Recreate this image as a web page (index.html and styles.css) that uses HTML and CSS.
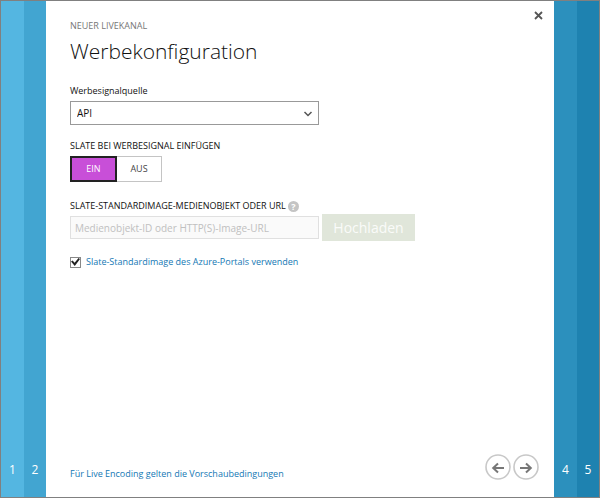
FILE: index.html
```html
<!DOCTYPE html>
<html lang="de">
<head>
<meta charset="utf-8">
<meta name="viewport" content="width=device-width, initial-scale=1">
<title>Werbekonfiguration</title>
<link rel="stylesheet" href="styles.css">
</head>
<body>
<div class="wizard">
  <button type="button" class="step step-1">1</button>
  <button type="button" class="step step-2">2</button>
  <main class="page">
    <button type="button" class="close" aria-label="Schließen">
      <svg width="9" height="9" viewBox="0 0 9 9" aria-hidden="true"><path d="M1 1L8 8M8 1L1 8" stroke="#555" stroke-width="1.8" fill="none"/></svg>
    </button>
    <header class="heading">
      <p class="eyebrow">NEUER LIVEKANAL</p>
      <h1 class="title">Werbekonfiguration</h1>
    </header>
    <form class="form">
      <div class="field">
        <label class="label" for="source">Werbesignalquelle</label>
        <div class="select-wrap">
          <select class="select" id="source"><option>API</option></select>
          <svg class="chevron" width="10" height="6" viewBox="0 0 10 6" aria-hidden="true"><path d="M1.500 1L5 4.500L8.500 1" stroke="#555" stroke-width="1.5" fill="none"/></svg>
        </div>
      </div>
      <fieldset class="field">
        <legend class="label">SLATE BEI WERBESIGNAL EINFÜGEN</legend>
        <div class="toggle">
          <button type="button" class="option option-on" aria-pressed="true">EIN</button>
          <button type="button" class="option" aria-pressed="false">AUS</button>
        </div>
      </fieldset>
      <div class="field">
        <div class="label-row">
          <label class="label" for="slate">SLATE-STANDARDIMAGE-MEDIENOBJEKT ODER URL</label>
          <button type="button" class="help" aria-label="Hilfe">?</button>
        </div>
        <div class="upload-row">
          <input class="input" id="slate" type="text" placeholder="Medienobjekt-ID oder HTTP(S)-Image-URL" disabled>
          <button type="button" class="upload" disabled>Hochladen</button>
        </div>
      </div>
      <div class="check-row">
        <input class="check" id="default-slate" type="checkbox" checked>
        <label class="link" for="default-slate">Slate-Standardimage des Azure-Portals verwenden</label>
      </div>
    </form>
    <footer class="footer">
      <a class="link" href="#">Für Live Encoding gelten die Vorschaubedingungen</a>
      <nav class="pager">
        <button type="button" class="arrow" aria-label="Zurück">
          <svg width="26" height="26" viewBox="0 0 26 26" fill="none" aria-hidden="true"><circle cx="13" cy="13" r="12" stroke="#c8c8c8" stroke-width="1.6"/><path d="M19 14H8M13 9.500L8.200 14L13 18.500" stroke="#777" stroke-width="2"/></svg>
        </button>
        <button type="button" class="arrow" aria-label="Weiter">
          <svg width="26" height="26" viewBox="0 0 26 26" fill="none" aria-hidden="true"><circle cx="13" cy="13" r="12" stroke="#c8c8c8" stroke-width="1.6"/><path d="M7 14H18M13 9.500L17.800 14L13 18.500" stroke="#777" stroke-width="2"/></svg>
        </button>
      </nav>
    </footer>
  </main>
  <button type="button" class="step step-4">4</button>
  <button type="button" class="step step-5">5</button>
</div>
</body>
</html>
```
FILE: styles.css
```css
* { box-sizing: border-box; }

body {
  margin: 0;
  font: 10px/14px "Open Sans", "Noto Sans", sans-serif;
  color: #111;
  background: #fff;
}

button, input, select { font: inherit; color: inherit; margin: 0; }
button { border: 0; padding: 0; background: none; }
svg { display: block; }

.wizard {
  display: grid;
  grid-template-columns: 23px 22px minmax(0, 1fr) 23px 22px;
  min-height: 100vh;
  border: 1px solid #808080;
}

.step {
  display: flex;
  align-items: flex-end;
  justify-content: center;
  padding-bottom: 19px;
  font-size: 12px;
  line-height: 16px;
  color: #fff;
}
.step-1 { background: #54b6e1; }
.step-2 { background: #42a5d1; }
.step-4 { background: #2c90bd; }
.step-5 { background: #1e82b0; }

.page {
  position: relative;
  display: flex;
  flex-direction: column;
  padding: 17px 15px 16px 24px;
}

.close { position: absolute; top: 10px; right: 11px; }

.eyebrow { margin: 0; font-size: 9px; line-height: 16px; color: #777; }
.title {
  margin: 0 0 16px;
  font-size: 21px;
  font-weight: 300;
  line-height: 34px;
}

.form { flex: 1; }
.field { margin: 0 0 14px; padding: 0; border: 0; min-width: 0; }
.label { display: block; padding: 0; margin-bottom: 3px; font-size: 9px; line-height: 14px; }

.select-wrap { position: relative; width: 249px; }
.select {
  display: block;
  width: 100%;
  height: 24px;
  padding: 0 6px;
  appearance: none;
  border: 1px solid #999;
  border-radius: 0;
  background: #fff;
}
.chevron { position: absolute; right: 6px; top: 10px; pointer-events: none; }

.toggle { display: flex; }
.option {
  width: 45px;
  height: 26px;
  border: 1px solid #c4c4c4;
  border-left: 0;
  font-size: 9px;
  color: #444;
}
.option-on {
  width: 47px;
  border: 2px solid #222;
  background: #c84fd8;
  color: #fff;
}

.label-row { display: flex; align-items: center; gap: 2px; margin-top: 17px; }
.label-row .label { margin: 0; }
.help {
  width: 11px;
  height: 11px;
  border-radius: 50%;
  background: #c4c4c4;
  color: #fff;
  font-size: 9px;
  font-weight: 700;
  line-height: 11px;
}

.upload-row { display: flex; align-items: center; gap: 3px; margin-top: 1px; }
.input {
  width: 249px;
  height: 23px;
  padding: 0 4px;
  border: 1px solid #e0e0e0;
  background: #fafafa;
}
.input::placeholder { color: #c0c0c0; opacity: 1; }
.upload {
  height: 27px;
  width: 93px;
  background: #e0e6da;
  color: #fafbf9;
  font-size: 14px;
}

.check-row { display: flex; align-items: center; gap: 5px; }
.check {
  display: grid;
  place-items: center;
  width: 11px;
  height: 11px;
  appearance: none;
  border: 1px solid #888;
  background: #fff;
}
.check:checked::after {
  content: "";
  width: 9px;
  height: 8px;
  background: #222;
  clip-path: polygon(0 45%, 18% 32%, 40% 58%, 84% 0, 100% 12%, 42% 100%);
}

.link { font-size: 9px; color: #1478b4; text-decoration: none; }

.footer { display: flex; align-items: center; justify-content: space-between; }
.footer .link { margin-top: 14px; }
.pager { display: flex; gap: 2px; }
```
